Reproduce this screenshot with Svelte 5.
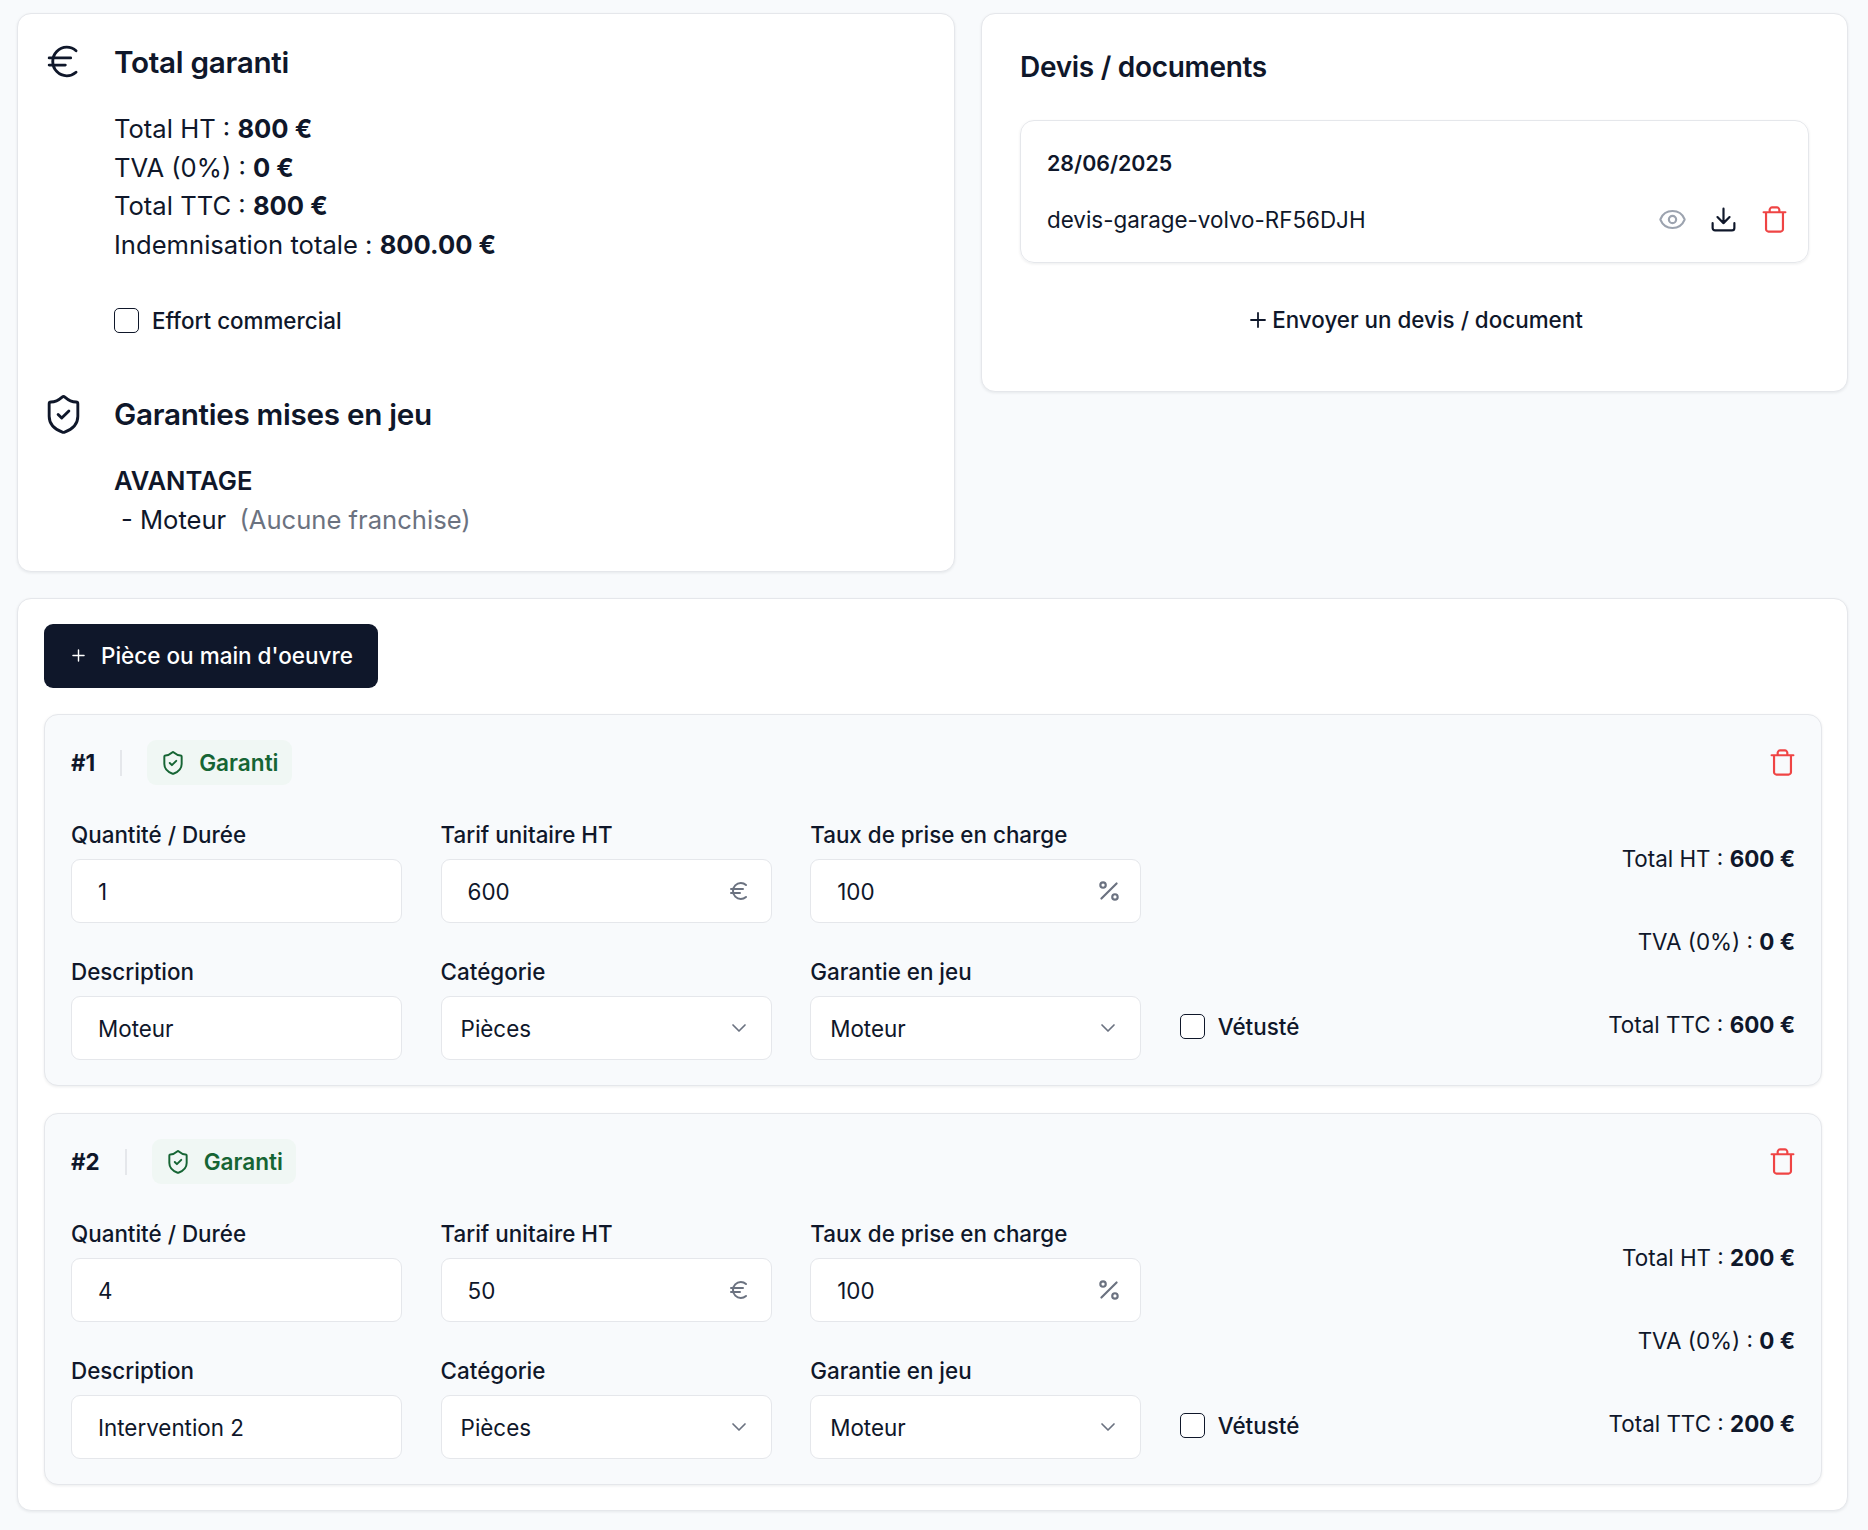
<script>
  const items = [
    { n: 1, qty: '1', price: '600', rate: '100', desc: 'Moteur', ht: 600, ttc: 600 },
    { n: 2, qty: '4', price: '50', rate: '100', desc: 'Intervention 2', ht: 200, ttc: 200 },
  ];
  const shield = 'M20 13c0 5-3.5 7.5-7.66 8.95a1 1 0 0 1-.67-.01C7.5 20.5 4 18 4 13V6a1 1 0 0 1 1-1c2 0 4.5-1.2 6.24-2.72a1.17 1.17 0 0 1 1.52 0C14.51 3.81 17 5 19 5a1 1 0 0 1 1 1z';
  const euro = 'M4 10h12M4 14h9M19 6a7.7 7.7 0 0 0-5.2-2A7.9 7.9 0 0 0 6 12c0 4.4 3.5 8 7.8 8 2 0 3.8-.8 5.2-2';
  const trash = 'M3 6h18M19 6v14c0 1-1 2-2 2H7c-1 0-2-1-2-2V6M8 6V4c0-1 1-2 2-2h4c1 0 2 1 2 2v2';
</script>

<div class="page">
  <div class="top">
    <section class="card summary">
      <div class="head">
        <svg class="big-icon" viewBox="0 0 24 24"><path d={euro} /></svg>
        <h2>Total garanti</h2>
      </div>
      <div class="lines">
        <div>Total HT : <b>800 €</b></div>
        <div>TVA (0%) : <b>0 €</b></div>
        <div>Total TTC : <b>800 €</b></div>
        <div>Indemnisation totale : <b>800.00 €</b></div>
      </div>
      <label class="check effort"><input type="checkbox" /> Effort commercial</label>
      <div class="head second">
        <svg class="big-icon" viewBox="0 0 24 24"><path d={shield} /><path d="m9 12 2 2 4-4" /></svg>
        <h2>Garanties mises en jeu</h2>
      </div>
      <div class="lines plan-lines">
        <div><b class="plan">AVANTAGE</b></div>
        <div class="cover">- Moteur <span class="muted">(Aucune franchise)</span></div>
      </div>
    </section>

    <section class="card docs">
      <h2>Devis / documents</h2>
      <div class="doc">
        <div class="doc-date">28/06/2025</div>
        <div class="doc-row">
          <span>devis-garage-volvo-RF56DJH</span>
          <div class="doc-actions">
            <svg class="act eye" viewBox="0 0 24 24"><path d="M2.06 12.35a1 1 0 0 1 0-.7 10.75 10.75 0 0 1 19.88 0 1 1 0 0 1 0 .7 10.75 10.75 0 0 1-19.88 0" /><circle cx="12" cy="12" r="3" /></svg>
            <svg class="act" viewBox="0 0 24 24"><path d="M12 15V3M7 10l5 5 5-5M21 15v4a2 2 0 0 1-2 2H5a2 2 0 0 1-2-2v-4" /></svg>
            <svg class="act red" viewBox="0 0 24 24"><path d={trash} /></svg>
          </div>
        </div>
      </div>
      <div class="send">
        <svg class="send-plus" viewBox="0 0 24 24"><path d="M5 12h14M12 5v14" /></svg>
        Envoyer un devis / document
      </div>
    </section>
  </div>

  <section class="card parts">
    <button class="add">
      <svg class="add-plus" viewBox="0 0 24 24"><path d="M5 12h14M12 5v14" /></svg>
      Pièce ou main d'oeuvre
    </button>

    {#each items as item}
      <article class="item">
        <header class="item-head">
          <strong class="num">#{item.n}</strong>
          <span class="sep"></span>
          <span class="badge">
            <svg class="badge-icon" viewBox="0 0 24 24"><path d={shield} /><path d="m9 12 2 2 4-4" /></svg>
            Garanti
          </span>
          <svg class="act red item-del" viewBox="0 0 24 24"><path d={trash} /></svg>
        </header>

        <div class="item-body">
          <div class="fields">
            <label class="field">Quantité / Durée
              <input class="ctl" value={item.qty} />
            </label>
            <label class="field">Tarif unitaire HT
              <span class="wrap">
                <input class="ctl" value={item.price} />
                <svg class="suffix" viewBox="0 0 24 24"><path d={euro} /></svg>
              </span>
            </label>
            <label class="field">Taux de prise en charge
              <span class="wrap">
                <input class="ctl" value={item.rate} />
                <svg class="suffix percent" viewBox="0 0 24 24"><path d="M19 5 5 19" /><circle cx="6.5" cy="6.5" r="2.5" /><circle cx="17.5" cy="17.5" r="2.5" /></svg>
              </span>
            </label>
            <span></span>
            <label class="field">Description
              <input class="ctl" value={item.desc} />
            </label>
            <label class="field">Catégorie
              <span class="wrap">
                <select class="ctl sel"><option>Pièces</option></select>
                <svg class="suffix chev" viewBox="0 0 24 24"><path d="m6 9 6 6 6-6" /></svg>
              </span>
            </label>
            <label class="field">Garantie en jeu
              <span class="wrap">
                <select class="ctl sel"><option>Moteur</option></select>
                <svg class="suffix chev" viewBox="0 0 24 24"><path d="m6 9 6 6 6-6" /></svg>
              </span>
            </label>
            <label class="check wear"><input type="checkbox" /> Vétusté</label>
          </div>
          <div class="totals">
            <div>Total HT : <b>{item.ht} €</b></div>
            <div>TVA (0%) : <b>0 €</b></div>
            <div>Total TTC : <b>{item.ttc} €</b></div>
          </div>
        </div>
      </article>
    {/each}
  </section>
</div>

<style>
  :global(*) {
    box-sizing: border-box;
  }
  :global(body) {
    margin: 0;
    background: #f8fafc;
  }

  .page {
    padding: 13px 20px 19px 17px;
    font-family: Inter, "Noto Sans", sans-serif;
    color: #0f172a;
  }
  svg {
    fill: none;
    stroke: currentColor;
    stroke-width: 2;
    stroke-linecap: round;
    stroke-linejoin: round;
    flex: none;
  }

  .top {
    display: grid;
    grid-template-columns: 938px 867px;
    gap: 26px;
    align-items: start;
    margin-bottom: 26px;
  }
  .card {
    background: #fff;
    border: 1px solid #e5e7eb;
    border-radius: 14px;
    box-shadow: 0 1px 3px rgba(15, 23, 42, 0.08);
  }

  .summary {
    height: 559px;
    padding: 26px 26px 0;
  }
  .head {
    display: flex;
    align-items: center;
    gap: 29px;
    height: 43px;
    margin-left: -2px;
  }
  .head.second {
    margin-top: 58px;
  }
  .big-icon {
    width: 43px;
    height: 43px;
    stroke-width: 1.6;
  }
  h2 {
    margin: 0;
    font-size: 28px;
    line-height: 38px;
    font-weight: 600;
    letter-spacing: -0.3px;
  }
  .summary h2 {
    font-size: 29.7px;
  }
  .lines {
    margin: 27px 0 0 70px;
    font-size: 25.6px;
    line-height: 38.7px;
  }
  .plan-lines {
    margin-top: 26px;
  }
  .lines b {
    font-weight: 700;
  }
  .plan {
    font-weight: 600 !important;
  }
  .cover {
    padding-left: 7px;
  }
  .muted {
    color: #6b7280;
    margin-left: 6px;
  }
  .check {
    display: flex;
    align-items: center;
    gap: 13px;
    font-size: 22.4px;
    font-weight: 500;
  }
  .check input {
    appearance: none;
    margin: 0;
    width: 25px;
    height: 25px;
    background: #fff;
    border: 1.5px solid #0f172a;
    border-radius: 5px;
  }
  .effort {
    margin: 42px 0 0 70px;
    line-height: 28px;
  }

  .docs {
    height: 379px;
    padding: 34px 38px 0;
  }
  .doc {
    margin-top: 34px;
    height: 143px;
    padding: 27px 19px 0 26px;
    border: 1px solid #e5e7eb;
    border-radius: 14px;
    box-shadow: 0 1px 3px rgba(15, 23, 42, 0.08);
  }
  .doc-date {
    font-size: 21.4px;
    line-height: 30px;
    font-weight: 600;
  }
  .doc-row {
    display: flex;
    align-items: center;
    justify-content: space-between;
    margin-top: 25px;
    font-size: 22.4px;
    line-height: 33px;
  }
  .doc-actions {
    display: flex;
    gap: 22px;
  }
  .act {
    width: 29px;
    height: 29px;
    stroke-width: 1.8;
  }
  .eye {
    color: #9ca3af;
  }
  .red {
    color: #ef4444;
  }
  .send {
    display: flex;
    align-items: center;
    justify-content: center;
    gap: 2px;
    margin-top: 39px;
    font-size: 22.4px;
    font-weight: 500;
    line-height: 36px;
  }
  .send-plus {
    width: 24px;
    height: 24px;
    stroke-width: 1.8;
  }

  .parts {
    padding: 25px 25px 25px 26px;
  }
  .add {
    display: flex;
    align-items: center;
    gap: 13px;
    height: 64px;
    width: 334px;
    padding: 0 0 2px 25px;
    border: 0;
    border-radius: 9px;
    background: #0f172a;
    color: #fff;
    font: 500 22.5px Inter, sans-serif;
  }
  .add-plus {
    width: 19px;
    height: 19px;
    stroke-width: 1.8;
  }

  .item {
    margin-top: 26px;
    height: 372px;
    padding: 25px 26px 0;
    background: #f8fafc;
    border: 1px solid #e5e7eb;
    border-radius: 14px;
    box-shadow: 0 1px 3px rgba(15, 23, 42, 0.08);
  }
  .item + .item {
    margin-top: 27px;
  }
  .item-head {
    display: flex;
    align-items: center;
    height: 45px;
  }
  .num {
    font-size: 22.4px;
    font-weight: 700;
  }
  .sep {
    width: 2px;
    height: 26px;
    margin: 0 25px;
    background: #e5e7eb;
  }
  .badge {
    display: flex;
    align-items: center;
    gap: 13px;
    height: 45px;
    padding: 0 13px;
    border-radius: 9px;
    background: #f0f7f4;
    color: #166534;
    font-size: 22.6px;
    font-weight: 600;
  }
  .badge-icon {
    width: 26px;
    height: 26px;
    stroke-width: 1.8;
  }
  .item-del {
    margin-left: auto;
    margin-right: -2px;
  }

  .item-body {
    display: flex;
    justify-content: space-between;
    margin-top: 36px;
  }
  .fields {
    display: grid;
    grid-template-columns: 331px 331px 331px auto;
    column-gap: 38.6px;
    row-gap: 35px;
  }
  .field {
    display: flex;
    flex-direction: column;
    gap: 10px;
    font-size: 22.4px;
    font-weight: 500;
    line-height: 28px;
  }
  .wrap {
    position: relative;
    display: block;
  }
  .ctl {
    display: block;
    width: 100%;
    height: 64px;
    padding: 0 26px;
    background: #fff;
    border: 1px solid #e5e7eb;
    border-radius: 9px;
    color: #0f172a;
    font: 400 22.4px Inter, sans-serif;
    outline: none;
  }
  .sel {
    appearance: none;
    padding-left: 19px;
  }
  .suffix {
    position: absolute;
    top: 20px;
    right: 21px;
    width: 24px;
    height: 24px;
    color: #6b7280;
    stroke-width: 2;
    pointer-events: none;
  }
  .percent {
    top: 19px;
    right: 19px;
    width: 26px;
    height: 26px;
  }
  .chev {
    stroke-width: 1.7;
  }
  .wear {
    align-self: end;
    height: 64px;
    margin-bottom: 2px;
  }
  .totals {
    display: flex;
    flex-direction: column;
    justify-content: space-between;
    height: 194px;
    margin-top: 24px;
    text-align: right;
    font-size: 22.4px;
    line-height: 28px;
  }
  .totals b {
    font-weight: 700;
  }
</style>
